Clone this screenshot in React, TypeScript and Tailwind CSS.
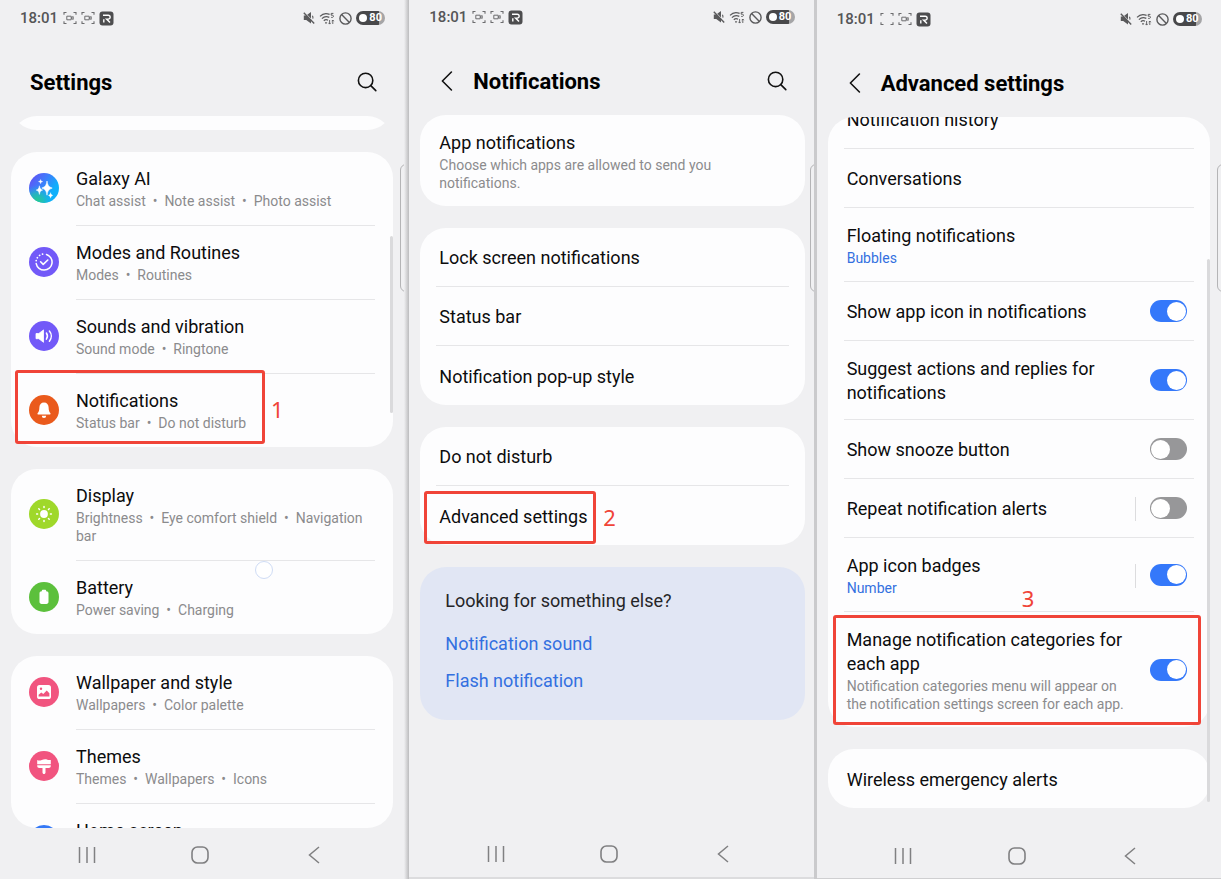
import type { ReactNode } from "react";

/* ---------- Icons ---------- */

function CaptureIcon({ camera = true }: { camera?: boolean }) {
  return (
    <svg width="14" height="14" viewBox="0 0 14 14" fill="none" stroke="#6c6c6e" strokeWidth="1.1" aria-hidden="true">
      <path d="M1 3.800V1.500H3.500M10.500 1.500H13V3.800M13 10.200v2.300h-2.500M3.500 12.500H1V10.200" />
      {camera && <path d="M3.800 5.200h4.400v3.600H3.800zM8.200 6.600l2-1v2.800l-2-1" strokeWidth="1" />}
    </svg>
  );
}

function RecorderIcon() {
  return (
    <svg width="15" height="15" viewBox="0 0 15 15" aria-hidden="true">
      <rect x="0.500" y="0.500" width="14" height="14" rx="3" fill="#4d4d4f" />
      <path d="M4 4.200h5.200a1.900 1.900 0 0 1 0 3.900H7.600L11 11.400M4.800 11.600V8.200" fill="none" stroke="#fff" strokeWidth="1.400" />
    </svg>
  );
}

function MuteIcon() {
  return (
    <svg width="12" height="12" viewBox="0 0 12 12" aria-hidden="true">
      <path d="M0.800 3.600h2.400L8 0v11.600L3.200 8H0.800z" fill="#5a5a5c" />
      <path d="M2 0.800 12 11" stroke="#f0f0f2" strokeWidth="1" />
      <path d="M0.800 0.800 11.200 11.400" stroke="#5a5a5c" strokeWidth="1.400" />
      <path d="M9.400 3.800c.6.900.7 1.900.4 2.800" stroke="#5a5a5c" strokeWidth="1.100" fill="none" />
    </svg>
  );
}

function WifiIcon() {
  return (
    <svg width="16" height="13" viewBox="0 0 16 13" fill="none" stroke="#5a5a5c" strokeWidth="1.200" aria-hidden="true">
      <path d="M1 4.400C3.600 1.600 7.400 1 10.600 2.400" />
      <path d="M2.900 6.600c2-2 5-2.400 7.400-1.200" />
      <path d="M4.800 8.700c1.200-1.100 2.900-1.300 4.200-.5" />
      <circle cx="7" cy="10.800" r="0.900" fill="#5a5a5c" stroke="none" />
      <path d="M14.400 1.400h-2.200v1.800h1.200c1.600 0 1.400 2.200-.1 2.200h-1.100" strokeWidth="1" />
      <path d="M10.600 8v4M9.400 10.800l1.200 1.300 1.200-1.300M13.800 12V8M12.800 9.200l1-1.200 1 1.200" strokeWidth="0.900" />
    </svg>
  );
}

function BlockIcon() {
  return (
    <svg width="13" height="13" viewBox="0 0 13 13" fill="none" stroke="#5a5a5c" strokeWidth="1.400" aria-hidden="true">
      <circle cx="6.500" cy="6.500" r="5.600" />
      <path d="M2.600 2.600l7.800 7.800" />
    </svg>
  );
}

function SearchIcon() {
  return (
    <svg width="20" height="20" viewBox="0 0 20 20" fill="none" stroke="#111" strokeWidth="1.600" strokeLinecap="round" aria-hidden="true">
      <circle cx="8.600" cy="8.400" r="7.200" />
      <path d="M13.800 13.600l5 5" />
    </svg>
  );
}

function ChevronIcon() {
  return (
    <svg width="12" height="20" viewBox="0 0 12 20" fill="none" stroke="#111" strokeWidth="1.600" strokeLinecap="round" strokeLinejoin="round" aria-hidden="true">
      <path d="M10.400 1 1.400 10l9 9" />
    </svg>
  );
}

function AiIcon() {
  return (
    <svg width="30" height="30" viewBox="0 0 30 30" aria-hidden="true">
      <defs>
        <linearGradient id="ai-base" x1="0.1" y1="0.1" x2="0.8" y2="0.6">
          <stop offset="0" stopColor="#5f55f5" />
          <stop offset="0.5" stopColor="#3d7dfb" />
          <stop offset="1" stopColor="#0fb0fb" />
        </linearGradient>
        <radialGradient id="ai-green" cx="0.25" cy="0.95" r="0.55">
          <stop offset="0" stopColor="#24cf86" />
          <stop offset="0.5" stopColor="#1fc3b0" stopOpacity="0.7" />
          <stop offset="1" stopColor="#12aef0" stopOpacity="0" />
        </radialGradient>
      </defs>
      <circle cx="15" cy="15" r="15" fill="url(#ai-base)" />
      <circle cx="15" cy="15" r="15" fill="url(#ai-green)" />
      <g fill="#fff" stroke="#fff" strokeLinejoin="round">
        <path strokeWidth="0.600" d="M18 8c.8 4.400 1.600 5.700 5.200 7.100-3.600 1.400-4.400 2.700-5.200 7.100-.8-4.400-1.600-5.700-5.200-7.100 3.600-1.400 4.400-2.700 5.200-7.100z" />
        <path strokeWidth="0.500" d="M10.400 12.800c.5 2.700 1 3.400 3.200 4.300-2.200.9-2.700 1.600-3.200 4.300-.5-2.700-1-3.400-3.200-4.300 2.200-.9 2.700-1.600 3.200-4.300z" />
        <path strokeWidth="0.300" d="M21.600 19.600c.3 1.600.7 2.200 2.200 2.800-1.500.6-1.900 1.200-2.200 2.800-.3-1.600-.7-2.200-2.200-2.800 1.500-.6 1.900-1.200 2.200-2.800z" />
        <path strokeWidth="0.300" d="M11.600 6.400l.6 1.600 1.600.6-1.600.6-.6 1.600-.6-1.600-1.600-.6 1.600-.6z" />
      </g>
    </svg>
  );
}

function Disc({ color, children }: { color: string; children?: ReactNode }) {
  return (
    <svg width="30" height="30" viewBox="0 0 30 30" fill="none" aria-hidden="true">
      <circle cx="15" cy="15" r="15" fill={color} />
      {children}
    </svg>
  );
}

const modesIcon = (
  <Disc color="#7259f8">
    <path d="M17.500 7.500A8 8 0 1 1 7.200 16.600" stroke="#fff" strokeWidth="1.500" strokeLinecap="round" />
    <path d="M7.200 13.600a8 8 0 0 1 8-6.600" stroke="#fff" strokeWidth="1.700" strokeLinecap="round" strokeDasharray="0.100 3" />
    <path d="M11.600 14.800l2.600 2.600 4.600-4.400" stroke="#fff" strokeWidth="1.600" strokeLinecap="round" strokeLinejoin="round" />
  </Disc>
);

const soundIcon = (
  <Disc color="#7259f8">
    <path d="M7 12.500h2.800l4.700-3.600v12.400l-4.700-3.600H7z" fill="#fff" stroke="#fff" strokeWidth="0.800" strokeLinejoin="round" />
    <path d="M17.400 12c1.300 1.900 1.300 4.300 0 6.200M20.400 10c2.500 3 2.500 7.200 0 10.200" stroke="#fff" strokeWidth="1.500" strokeLinecap="round" />
  </Disc>
);

const bellIcon = (
  <Disc color="#ea5a1c">
    <path d="M15 7.400c-2.900 0-4.600 2.100-4.600 4.800 0 3.200-.8 4.600-1.700 5.900-.5.800-.2 1.500.7 1.500h11.200c.9 0 1.200-.7.700-1.500-.9-1.300-1.700-2.700-1.700-5.900 0-2.700-1.700-4.800-4.600-4.800z" fill="#fff" />
    <path d="M12.800 20.700h4.400a2.200 2.200 0 0 1-4.400 0z" fill="#fff" />
  </Disc>
);

const displayIcon = (
  <Disc color="#9fd82a">
    <circle cx="15" cy="15" r="3.900" fill="#fff" />
    <path
      d="M15 7.600v1M15 21.400v1M7.600 15h1M21.400 15h1M9.800 9.800l.7.7M19.500 19.500l.7.7M9.800 20.200l.7-.7M19.500 10.500l.7-.7"
      stroke="#fff"
      strokeWidth="1.500"
      strokeLinecap="round"
    />
  </Disc>
);

const batteryIcon = (
  <Disc color="#5cc03c">
    <path d="M12.800 9.200c0-.9.500-1.400 1.400-1.400h1.600c.9 0 1.400.5 1.400 1.400 1.500 0 2.300.8 2.300 2v8.600c0 1.300-.8 2.100-2.100 2.100h-4.800c-1.300 0-2.100-.8-2.100-2.100v-8.600c0-1.200.8-2 2.300-2z" fill="#fff" />
  </Disc>
);

const wallpaperIcon = (
  <Disc color="#f1547f">
    <rect x="8" y="8" width="14" height="14" rx="2.600" fill="#fff" />
    <path d="M9.600 19.600v-1.800l2.700-2.400 2 1.500 3.400-3.300 2.700 2.600v3.400z" fill="#f1547f" />
    <circle cx="12" cy="11.800" r="1.200" fill="#f1547f" />
  </Disc>
);

const themesIcon = (
  <Disc color="#f1547f">
    <path d="M8.200 9c1.700.9 3 .5 4.600-.1 2-.8 4-.9 5.600-.2 1.200.5 2.200.4 3.400.2v4.300H8.200z" fill="#fff" />
    <path d="M8.200 14.300h13.600v.5c0 1.500-.8 2.200-2.200 2.200h-3.100v4.500c0 .9-.6 1.500-1.500 1.500s-1.500-.6-1.500-1.500V17h-3.100c-1.400 0-2.200-.7-2.200-2.200z" fill="#fff" />
  </Disc>
);

const homeIcon = <Disc color="#3478f6" />;

/* ---------- Phone frame ---------- */

function StatusBar({ firstCamera = true }: { firstCamera?: boolean }) {
  return (
    <div className="flex h-[34px] shrink-0 items-center justify-between pr-[19px] pl-5">
      <div className="flex items-center gap-1">
        <span className="mr-px text-[15px] leading-5 font-medium text-[#555557]">18:01</span>
        <CaptureIcon camera={firstCamera} />
        <CaptureIcon />
        <RecorderIcon />
      </div>
      <div className="flex items-center gap-1">
        <MuteIcon />
        <WifiIcon />
        <BlockIcon />
        <span className="flex h-[14px] w-[29px] items-center gap-[2px] rounded-full bg-linear-to-r from-[#48484a] from-80% to-[#a5a5a7] to-80% pl-[3px] text-[11px] leading-[14px] font-bold text-white">
          <span className="size-2 rounded-full bg-white" />
          80
        </span>
      </div>
    </div>
  );
}

function Header({ title, back = false, search = false }: { title: string; back?: boolean; search?: boolean }) {
  return (
    <header className={`flex h-[81px] shrink-0 items-center pt-[13px] pr-[27px] ${back ? "pl-8" : "pl-[30px]"}`}>
      {back && (
        <button type="button" aria-label="Back" className="mr-5">
          <ChevronIcon />
        </button>
      )}
      <h1 className="flex-1 pt-0.5 text-[22px] leading-7 font-bold text-black">{title}</h1>
      {search && (
        <button type="button" aria-label="Search">
          <SearchIcon />
        </button>
      )}
    </header>
  );
}

function NavBar() {
  return (
    <nav className="grid h-[50px] shrink-0 grid-cols-3 items-center justify-items-center pt-1 pr-[34px] pl-[30px]">
      <button type="button" aria-label="Recents">
        <svg width="18" height="16" viewBox="0 0 18 16" fill="none" stroke="#808082" strokeWidth="1.500">
          <path d="M1.500 0v16M9 0v16M16.500 0v16" />
        </svg>
      </button>
      <button type="button" aria-label="Home">
        <svg width="18" height="18" viewBox="0 0 18 18" fill="none" stroke="#808082" strokeWidth="1.600">
          <rect x="1" y="1" width="16" height="16" rx="5.500" />
        </svg>
      </button>
      <button type="button" aria-label="Go back">
        <svg width="12" height="18" viewBox="0 0 12 18" fill="none" stroke="#808082" strokeWidth="1.500">
          <path d="M11 1 1.500 9l9.500 8" />
        </svg>
      </button>
    </nav>
  );
}

function Phone({ className, children }: { className: string; children: ReactNode }) {
  return (
    <section className={`relative flex min-w-0 flex-1 flex-col overflow-hidden bg-[#f0f0f2] ${className}`}>
      {children}
      <NavBar />
      <span className="absolute top-[164px] -right-1 h-32 w-2 rounded-l-md border border-[#b4b4b6]" />
    </section>
  );
}

function Card({ children, className = "" }: { children?: ReactNode; className?: string }) {
  return <div className={`rounded-[26px] bg-[#fdfdfe] ${className}`}>{children}</div>;
}

/* ---------- Annotations ---------- */

function Mark({ box, label, children }: { box: string; label: string; children: string }) {
  return (
    <>
      <span className={`pointer-events-none absolute z-10 rounded-[3px] border-3 border-[#f04438] ${box}`} />
      <span className={`absolute z-10 font-['Noto_Sans',sans-serif] text-[22px] leading-6 text-[#f04438] ${label}`}>
        {children}
      </span>
    </>
  );
}

/* ---------- Settings list ---------- */

type Entry = { title: string; details: string[]; icon: ReactNode; mark?: ReactNode };

const SEPARATOR = "\u00a0\u00a0•\u00a0 ";

function EntryRow({ entry, last }: { entry: Entry; last: boolean }) {
  return (
    <li className="relative flex px-[18px]">
      <a href="#" className="flex flex-1 items-center gap-[17px]">
        <span className="shrink-0 pb-[2px]">{entry.icon}</span>
        <span className={`flex flex-1 flex-col gap-px py-[15px] ${last ? "" : "border-b border-[#e6e6e8]"}`}>
          <span className="text-[18px] leading-6 text-[#0c0c0d]">{entry.title}</span>
          <span className="text-[14px] leading-[18px] text-[#8b8b8d]">{entry.details.join(SEPARATOR)}</span>
        </span>
      </a>
      {entry.mark}
    </li>
  );
}

function EntryCard({ entries }: { entries: Entry[] }) {
  return (
    <Card>
      <ul>
        {entries.map((e, i) => (
          <EntryRow key={e.title} entry={e} last={i === entries.length - 1} />
        ))}
      </ul>
    </Card>
  );
}

const connected: Entry[] = [
  { title: "Galaxy AI", details: ["Chat assist", "Note assist", "Photo assist"], icon: <AiIcon /> },
  { title: "Modes and Routines", details: ["Modes", "Routines"], icon: modesIcon },
  { title: "Sounds and vibration", details: ["Sound mode", "Ringtone"], icon: soundIcon },
  {
    title: "Notifications",
    details: ["Status bar", "Do not disturb"],
    icon: bellIcon,
    mark: (
      <Mark box="-top-1 left-1 h-[74px] w-[250px]" label="top-[23px] left-[260px]">
        1
      </Mark>
    ),
  },
];

const device: Entry[] = [
  { title: "Display", details: ["Brightness", "Eye comfort shield", "Navigation bar"], icon: displayIcon },
  { title: "Battery", details: ["Power saving", "Charging"], icon: batteryIcon },
];

const look: Entry[] = [
  { title: "Wallpaper and style", details: ["Wallpapers", "Color palette"], icon: wallpaperIcon },
  { title: "Themes", details: ["Themes", "Wallpapers", "Icons"], icon: themesIcon },
  { title: "Home screen", details: ["Layout", "App icon badges"], icon: homeIcon },
];

/* ---------- Preference rows ---------- */

type RowProps = {
  title: string;
  note?: string;
  value?: string;
  tall?: boolean;
  checked?: boolean;
  split?: boolean;
  last?: boolean;
  mark?: ReactNode;
};

function Row({ title, note, value, tall, checked, split, last, mark }: RowProps) {
  const pad = note || value || tall ? "pt-4 pb-[14px]" : "pt-[18px] pb-4";
  const id = title.toLowerCase().replace(/ /g, "-");
  const text = (
    <>
      <span className="text-[18px] leading-6 text-[#0c0c0d]">{title}</span>
      {value && <span className="text-[14px] leading-[18px] text-[#3370e0]">{value}</span>}
      {note && <span className="text-[14px] leading-[18px] text-[#8b8b8d]">{note}</span>}
    </>
  );
  return (
    <li
      className={`relative mx-4 flex min-h-[59px] items-center pr-[7px] pl-[3px] ${pad} ${last ? "" : "border-b border-[#e6e6e8]"}`}
    >
      {checked === undefined ? (
        <a href="#" className="flex flex-1 flex-col gap-px">
          {text}
        </a>
      ) : (
        <>
          <label htmlFor={id} className="flex flex-1 flex-col gap-px pr-5">
            {text}
          </label>
          {split && <span className="mr-[14px] -ml-[15px] h-6 w-px bg-[#dcdcde]" />}
          <input
            id={id}
            type="checkbox"
            defaultChecked={checked}
            className="mb-[2px] flex h-[22px] w-[37px] shrink-0 appearance-none items-center rounded-full bg-[#979799] p-px before:size-[19px] before:rounded-full before:bg-white checked:justify-end checked:bg-[#3478fa]"
          />
        </>
      )}
      {mark}
    </li>
  );
}

function RowCard({ rows }: { rows: RowProps[] }) {
  return (
    <Card>
      <ul>
        {rows.map((r, i) => (
          <Row key={r.title} {...r} last={i === rows.length - 1} />
        ))}
      </ul>
    </Card>
  );
}

/* ---------- Screens ---------- */

function SettingsScreen() {
  return (
    <Phone className="border-b border-[#f0f0f2] pt-px">
      <StatusBar />
      <Header title="Settings" search />
      <main className="relative mx-[11px] min-h-0 flex-1 overflow-hidden rounded-[26px]">
        <div className="-mt-[46px] flex flex-col gap-[22px]">
          <Card className="h-[60px] shrink-0" />
          <EntryCard entries={connected} />
          <EntryCard entries={device} />
          <EntryCard entries={look} />
        </div>
        <span className="absolute top-[120px] right-0 h-[177px] w-[3px] rounded-full bg-[#dadadc]" />
        <span className="absolute top-[445px] left-[244px] size-[18px] rounded-full border border-[#cfdcf5] bg-white/80" />
      </main>
    </Phone>
  );
}

function NotificationsScreen() {
  return (
    <Phone className="border-r-2 border-[#cacacc] pb-[2px] shadow-[inset_0_-2px_0_#dcdcde]">
      <StatusBar />
      <Header title="Notifications" back search />
      <main className="mr-[9px] ml-[11px] flex min-h-0 flex-1 flex-col gap-[22px] overflow-hidden">
        <RowCard rows={[{ title: "App notifications", note: "Choose which apps are allowed to send you notifications." }]} />
        <RowCard
          rows={[{ title: "Lock screen notifications" }, { title: "Status bar" }, { title: "Notification pop-up style" }]}
        />
        <RowCard
          rows={[
            { title: "Do not disturb" },
            {
              title: "Advanced settings",
              mark: (
                <Mark box="top-[5px] -left-3 h-[53px] w-[172px]" label="top-[19px] left-[167px]">
                  2
                </Mark>
              ),
            },
          ]}
        />
        <section className="rounded-[26px] bg-[#e1e6f4] px-[25px] pt-[22px] pb-[27px]">
          <h2 className="text-[18px] leading-6 text-[#252528]">Looking for something else?</h2>
          <ul className="mt-[19px] flex flex-col gap-[13px] text-[18px] leading-6 text-[#3370e0]">
            <li>
              <a href="#">Notification sound</a>
            </li>
            <li>
              <a href="#">Flash notification</a>
            </li>
          </ul>
        </section>
      </main>
    </Phone>
  );
}

function AdvancedScreen() {
  return (
    <Phone className="pt-[2px] shadow-[inset_0_-1px_0_#cfcfd1]">
      <StatusBar firstCamera={false} />
      <Header title="Advanced settings" back />
      <main className="relative mx-[11px] min-h-0 flex-1 overflow-hidden rounded-t-[26px]">
        <div className="-mt-[27px] flex flex-col gap-[22px]">
          <RowCard
            rows={[
              { title: "Notification history" },
              { title: "Conversations" },
              { title: "Floating notifications", value: "Bubbles" },
              { title: "Show app icon in notifications", checked: true },
              { title: "Suggest actions and replies for notifications", checked: true, tall: true },
              { title: "Show snooze button", checked: false },
              { title: "Repeat notification alerts", checked: false, split: true },
              { title: "App icon badges", value: "Number", checked: true, split: true },
              {
                title: "Manage notification categories for each app",
                note: "Notification categories menu will appear on the notification settings screen for each app.",
                checked: true,
                mark: (
                  <Mark box="top-[3px] -right-[7px] -left-[11px] h-[110px]" label="-top-[26px] left-[178px]">
                    3
                  </Mark>
                ),
              },
            ]}
          />
          <RowCard rows={[{ title: "Wireless emergency alerts" }]} />
        </div>
        <span className="absolute top-[142px] right-0 h-[543px] w-[3px] rounded-full bg-[#dadadc]" />
      </main>
    </Phone>
  );
}

export default function App() {
  return (
    <div className="flex h-screen bg-[#cacacc] font-['Roboto','Liberation_Sans',sans-serif]">
      <SettingsScreen />
      <div className="w-[5px] shrink-0 bg-linear-to-r from-[#f0f0f2] to-[#bcbcbe]" />
      <NotificationsScreen />
      <div className="w-px shrink-0 bg-[#cacacc]" />
      <AdvancedScreen />
    </div>
  );
}
